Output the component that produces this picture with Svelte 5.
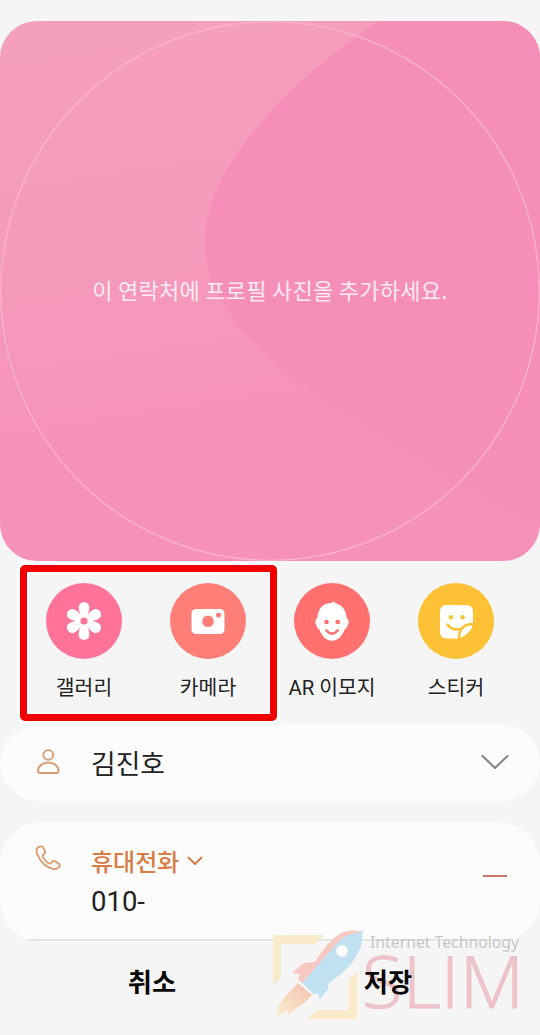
<script>
  const actions = [
    { id: 'gallery', label: '갤러리', color: '#ff7399' },
    { id: 'camera', label: '카메라', color: '#ff7f78' },
    { id: 'emoji', label: 'AR 이모지', color: '#ff706f' },
    { id: 'sticker', label: '스티커', color: '#fdc136' }
  ];
  const petals = [0, 60, 120, 180, 240, 300];
</script>

<main class="screen">
  <section class="hero">
    <svg class="hero-art" viewBox="0 0 540 540" aria-hidden="true">
      <defs>
        <linearGradient id="base" x1="0.1" y1="0" x2="0.25" y2="1">
          <stop offset="0" stop-color="#f4a0bc" />
          <stop offset="0.45" stop-color="#f59abb" />
          <stop offset="0.85" stop-color="#f691b9" />
          <stop offset="1" stop-color="#f691b9" />
        </linearGradient>
      </defs>
      <rect width="540" height="540" fill="url(#base)" />
      <path d="M378 0C346 22 321 42 296 65C276 83 262 100 248 117C234 138 226 149 220 161C210 180 205 202 205 220C205 245 211 265 226 286C236 303 244 311 255 321C271 337 290 354 310 369C334 387 355 400 379 415C405 431 432 447 458 462C485 477 512 493 540 507V0Z" fill="#f68fb7" />
      <circle cx="270" cy="270" r="269.3" fill="none" stroke="#fbb3ce" stroke-width="1.3" />
    </svg>
    <p>이 연락처에 프로필 사진을 추가하세요.</p>
  </section>

  <section class="actions">
    {#each actions as action}
      <button class="action">
        <span class="disc" style="background: {action.color}">
          <svg viewBox="0 0 76 76" width="76" height="76" fill="#fff">
            {#if action.id === 'gallery'}
              {#each petals as a}
                <path d="M38 38L34.8 33C33.6 30 32.7 27.4 32.7 24.6C32.7 21.2 35 19.3 38 19.3S43.3 21.2 43.3 24.6C43.3 27.4 42.4 30 41.2 33Z" transform="rotate({a} 38 38)" />
              {/each}
              <circle cx="38" cy="38" r="6" />
              <circle cx="38" cy="38" r="3.6" fill={action.color} />
            {:else if action.id === 'camera'}
              <rect x="21.5" y="26" width="33" height="25" rx="4.5" />
              <circle cx="38" cy="38.3" r="5.8" fill={action.color} />
              <circle cx="48.5" cy="32" r="2.5" fill={action.color} />
            {:else if action.id === 'emoji'}
              <path d="M41 18.3C40 19.2 40.6 20 42.3 20.6C48.8 22.6 52.2 27.5 52.6 35.2C54.8 36 55 38.6 54.2 41.2C53.4 43.9 52.4 45.4 50.8 46C48.2 53.4 43.6 57.8 38 57.8S27.8 53.4 25.2 46C23.6 45.4 22.6 43.9 21.8 41.2C21 38.6 21.2 36 23.4 35.2C23.8 26 28.6 20.6 36 20C38 19.8 39.5 18.9 41 18.3Z" />
              <circle cx="32.5" cy="39" r="2.3" fill={action.color} />
              <circle cx="43.8" cy="39" r="2.3" fill={action.color} />
              <path d="M32.3 47.5Q38 53.8 43.7 47.5" fill="none" stroke={action.color} stroke-width="2.6" stroke-linecap="round" />
            {:else}
              <path d="M29 22H48Q55 22 55 29V39.8C46 39.5 39.5 45 40 55.5H29Q22 55.5 22 48.5V29Q22 22 29 22Z" />
              <path d="M42.4 54.8C42 47 46.5 42.2 54.6 42.4C53.5 46 51.4 48.8 48.8 50.8C47 52.6 44.8 54.2 42.4 54.8Z" />
              <circle cx="33" cy="34.2" r="2.2" fill={action.color} />
              <circle cx="44.6" cy="34.2" r="2.2" fill={action.color} />
              <path d="M29.5 41.6Q34.5 47.9 42 46" fill="none" stroke={action.color} stroke-width="2.6" stroke-linecap="round" />
            {/if}
          </svg>
        </span>
        <span class="label">{action.label}</span>
      </button>
    {/each}
    <span class="highlight"></span>
  </section>

  <section class="card name">
    <svg class="lead" viewBox="0 0 28 28" width="28" height="28">
      <circle cx="14.3" cy="6" r="4.9" />
      <path d="M6 24Q4 24 4 22C4 17 8.4 13.6 14.3 13.6S24.6 17 24.6 22Q24.6 24 22.6 24Z" />
    </svg>
    <span class="value">김진호</span>
    <svg class="chevron" viewBox="0 0 28 16" width="28" height="16"><path d="M1.5 1L14 13L26.5 1" /></svg>
  </section>

  <section class="card phone">
    <svg class="lead" viewBox="0 0 28 28" width="28" height="28">
      <path d="M4.6 3C2.4 4.2 2 7.5 3.8 11.3C6.6 17.5 12 22.8 18.2 24.7C21.7 25.7 24.1 24.8 25.5 22.4C26.2 21.2 25.7 20.4 24.6 19.6L20.9 17.3C19.8 16.6 18.8 16.8 18 17.8L17.1 18.9C16.3 19.8 15.3 19.8 14.2 19.1C12 17.6 10.3 15.5 9 13.1C8.4 12 8.6 11.2 9.5 10.5L10.3 9.9C11.4 9.1 11.5 8.2 11 7.1L9.3 3.7C8.5 2 6.2 2.1 4.6 3Z" />
    </svg>
    <div class="fields">
      <div class="type">휴대전화
        <svg viewBox="0 0 16 10" width="16" height="10"><path d="M1.5 1.5L8 8L14.5 1.5" /></svg>
      </div>
      <div class="number">010-</div>
    </div>
    <span class="minus"></span>
  </section>

  <footer>
    <svg class="watermark" viewBox="0 0 280 115" width="280" height="115">
      <defs>
        <linearGradient id="flame" x1="1" y1="0" x2="0" y2="1">
          <stop offset="0.1" stop-color="#f4c3b5" /><stop offset="0.9" stop-color="#faebc8" />
        </linearGradient>
      </defs>
      <path d="M13 15H64L55 24H21V57L13 66Z M97 51V99H47L57 90H89V59Z" fill="#f9eac9" />
      <path d="M103 10.5L100 15C93 15 87 18 81 23L42 63L38 59L39.5 54.3L32 52.3L44 43L55 42C63 30 72 16 84 12Q92 9.5 100 11.2Z" fill="#f7c8c2" />
      <path d="M103.5 10.3L102 14C103 20 102 25 99 31C95 39 90 46 84 51C79 56 73 60 68.5 63.5L68 69L60 79L57.5 73.3L54 74.5L42 63L79 21C86 14.5 93 13.5 99 12.5Z" fill="#c0e1f2" />
      <circle cx="82" cy="31" r="6" fill="#fbfbfb" />
      <path d="M38 63L52 75L44 83L35 89L28 96L28 90L17 97L20 89L14 93L23 79Z" fill="url(#flame)" />
      <text class="tag" x="110" y="28" textLength="149" lengthAdjust="spacingAndGlyphs">Internet Technology</text>
      <text class="brand" x="102" y="88" textLength="162" lengthAdjust="spacingAndGlyphs">SLIM</text>
    </svg>
    <button>취소</button>
    <button>저장</button>
  </footer>
</main>

<style>
  :global(body) { margin: 0; background: #f5f5f5; }
  .screen {
    box-sizing: border-box;
    width: 540px;
    height: 1035px;
    padding-top: 21px;
    overflow: hidden;
    display: flex;
    flex-direction: column;
    background: #f5f5f5;
    color: #222;
    font-family: "Noto Sans CJK KR", sans-serif;
  }
  button { border: 0; padding: 0; background: none; color: inherit; font: inherit; }
  .hero {
    position: relative;
    flex: none;
    height: 539.5px;
    border-radius: 37px;
    overflow: hidden;
    display: flex;
    align-items: center;
    justify-content: center;
  }
  .hero-art { position: absolute; inset: 0; width: 540px; height: 540px; }
  .hero p { position: relative; margin: 0 0 3px; color: #fceaf4; font-size: 22px; line-height: 32px; letter-spacing: 0.27px; white-space: nowrap; }
  .actions {
    position: relative;
    flex: none;
    height: 164.5px;
    box-sizing: border-box;
    padding: 22.5px 22px 0;
    display: grid;
    grid-template-columns: repeat(4, 124px);
  }
  .action { display: flex; flex-direction: column; align-items: center; }
  .disc { width: 76px; height: 76px; border-radius: 50%; }
  .disc svg { display: block; }
  .label { margin-top: 14px; font-family: Roboto, "Noto Sans CJK KR", sans-serif; font-size: 20.4px; line-height: 30px; white-space: nowrap; }
  .highlight {
    position: absolute;
    left: 20px;
    top: 4.5px;
    width: 257px;
    height: 156px;
    box-sizing: border-box;
    border: 7px solid #f00000;
    border-radius: 5px;
    box-shadow: 0 0 0 3px #fff, inset 0 0 0 2px #fff;
  }
  .card { flex: none; display: flex; background: #fcfcfc; box-sizing: border-box; }
  .card svg { fill: none; stroke-linecap: round; stroke-linejoin: round; }
  .lead { stroke: #d9986e; stroke-width: 1.8; }
  .name { height: 76px; border-radius: 38px; align-items: center; padding: 0 31px 0 34px; }
  .value { margin-left: 29px; font-size: 26.8px; line-height: 40px; flex: 1; }
  .chevron { stroke: #858585; stroke-width: 2.1; }
  .phone { margin-top: 21px; height: 120px; border-radius: 42px; padding: 22px 33px 0 34px; align-items: flex-start; }
  .fields { margin-left: 29px; flex: 1; }
  .type { display: flex; align-items: center; gap: 8px; color: #d97b46; font-size: 24px; font-weight: 500; line-height: 34px; }
  .type svg { stroke: #d97b46; stroke-width: 1.9; }
  .number { font-family: Roboto, sans-serif; font-size: 27.5px; line-height: 40px; margin-top: 4px; }
  .minus { width: 24px; height: 2px; margin-top: 31px; background: #c9776c; }
  footer {
    position: relative;
    flex: none;
    margin-top: -3px;
    height: 96px;
    padding: 0 34px;
    display: grid;
    grid-template-columns: 236px 236px;
    align-items: start;
  }
  footer::before { content: ""; position: absolute; left: 28px; right: 28px; top: 0; height: 2px; background: #e4e4e4; }
  footer button { position: relative; margin-top: 23px; font-size: 26.3px; line-height: 38px; font-weight: 700; color: #080808; }
  .watermark { position: absolute; left: 260px; top: -19px; }
  .tag { font-family: "Noto Sans", sans-serif; font-size: 16px; fill: #c8c8c8; }
  .brand { font-family: "Open Sans", sans-serif; font-weight: 300; font-size: 72px; fill: #edc2c8; stroke: #edc2c8; stroke-width: 1; }
</style>
